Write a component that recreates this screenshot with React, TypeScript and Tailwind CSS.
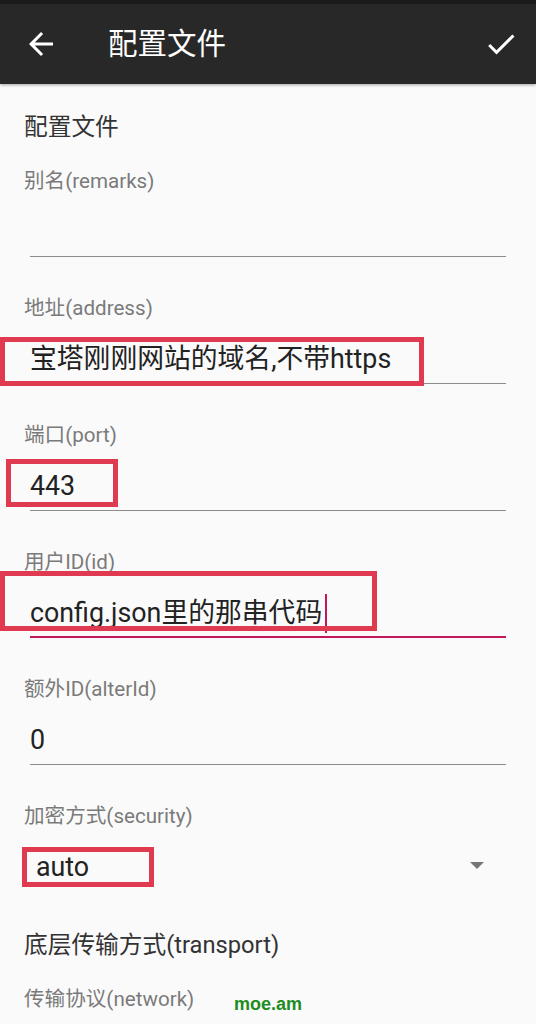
import React from "react";

const FONT = "font-['Roboto','Noto_Sans_CJK_SC',sans-serif]";

function BackIcon() {
  return (
    <svg width="36" height="36" viewBox="0 0 24 24" fill="#ffffff">
      <path d="M20 11H7.83l5.59-5.59L12 4l-8 8 8 8 1.41-1.41L7.83 13H20v-2z" />
    </svg>
  );
}

function CheckIcon() {
  return (
    <svg width="36" height="36" viewBox="0 0 24 24" fill="#ffffff">
      <path d="M9 16.17L4.83 12l-1.42 1.41L9 19 21 7l-1.41-1.41z" />
    </svg>
  );
}

function Field({
  label,
  value,
  focused,
  cursor,
}: {
  label: string;
  value?: string;
  focused?: boolean;
  cursor?: boolean;
}) {
  return (
    <div className="h-[127px]">
      <div className="h-[40px] pl-[24px] text-[20.6px] leading-[40px] text-[#7a7a7a]">{label}</div>
      <div
        className={
          focused
            ? "ml-[30px] mr-[30px] h-[56px] whitespace-nowrap border-b-2 border-[#c2185b] pt-[15px] text-[26.8px] leading-[32px] text-[#222222]"
            : "ml-[30px] mr-[30px] h-[56px] whitespace-nowrap border-b border-[#8c8c8c] pt-[15px] text-[26.8px] leading-[32px] text-[#222222]"
        }
      >
        {value}
        {cursor ? (
          <span className="-mb-[4px] -mt-[3px] ml-[3px] inline-block h-[39px] w-[2px] bg-[#c2185b] align-top" />
        ) : null}
      </div>
    </div>
  );
}

export default function App() {
  return (
    <div className={`relative h-[1024px] w-[536px] overflow-hidden bg-[#fafafa] ${FONT}`}>
      {/* App bar */}
      <div className="relative z-10 h-[84px] border-t-4 border-[#1b1b1b] bg-[#282828] shadow-[0_1px_3px_rgba(0,0,0,0.35)]">
        <div className="flex h-[80px] items-center pl-[23px] pr-[17px]">
          <BackIcon />
          <div className="ml-[49px] text-[29.5px] leading-[36px] text-white">配置文件</div>
          <div className="ml-auto">
            <CheckIcon />
          </div>
        </div>
      </div>

      {/* Content */}
      <div className="pt-[23px]">
        <div className="h-[40px] pl-[24px] text-[23.7px] leading-[40px] text-[#333333]">配置文件</div>
        <div className="mt-[14px]">
          <Field label="别名(remarks)" value="" />
          <Field label="地址(address)" value="宝塔刚刚网站的域名,不带https" />
          <Field label="端口(port)" value="443" />
          <Field label="用户ID(id)" value="config.json里的那串代码" focused cursor />
          <Field label="额外ID(alterId)" value="0" />
          <div className="h-[127px]">
            <div className="h-[40px] pl-[24px] text-[20.6px] leading-[40px] text-[#7a7a7a]">加密方式(security)</div>
            <div className="ml-[36px] mr-[52px] flex h-[56px] items-start justify-between pt-[15px]">
              <span className="text-[26.8px] leading-[32px] text-[#222222]">auto</span>
              <svg width="14" height="8" viewBox="0 0 14 8" className="mt-[11px]">
                <path d="M0 0L14 0L7 7Z" fill="#777777" />
              </svg>
            </div>
          </div>
        </div>
        <div className="mt-[2px] h-[40px] pl-[24px] text-[23.7px] leading-[40px] text-[#333333]">
          底层传输方式(transport)
        </div>
        <div className="mt-[14px] h-[40px] pl-[24px] text-[20.6px] leading-[40px] text-[#7a7a7a]">传输协议(network)</div>
      </div>

      {/* Red annotation boxes */}
      <div className="absolute left-0 top-[337px] h-[49px] w-[424px] border-[5px] border-[#e03a50]" />
      <div className="absolute left-[6px] top-[459px] h-[48px] w-[112px] border-[5px] border-[#e03a50]" />
      <div className="absolute left-0 top-[571px] h-[60px] w-[377px] border-[5px] border-[#e03a50]" />
      <div className="absolute left-[22px] top-[847px] h-[40px] w-[132px] border-[5px] border-[#e03a50]" />

      {/* Watermark */}
      <div className="absolute left-[234px] top-[992px] font-['Liberation_Sans',sans-serif] text-[18px] font-bold leading-[24px] text-[#1e8c1e]">
        moe.am
      </div>
    </div>
  );
}
